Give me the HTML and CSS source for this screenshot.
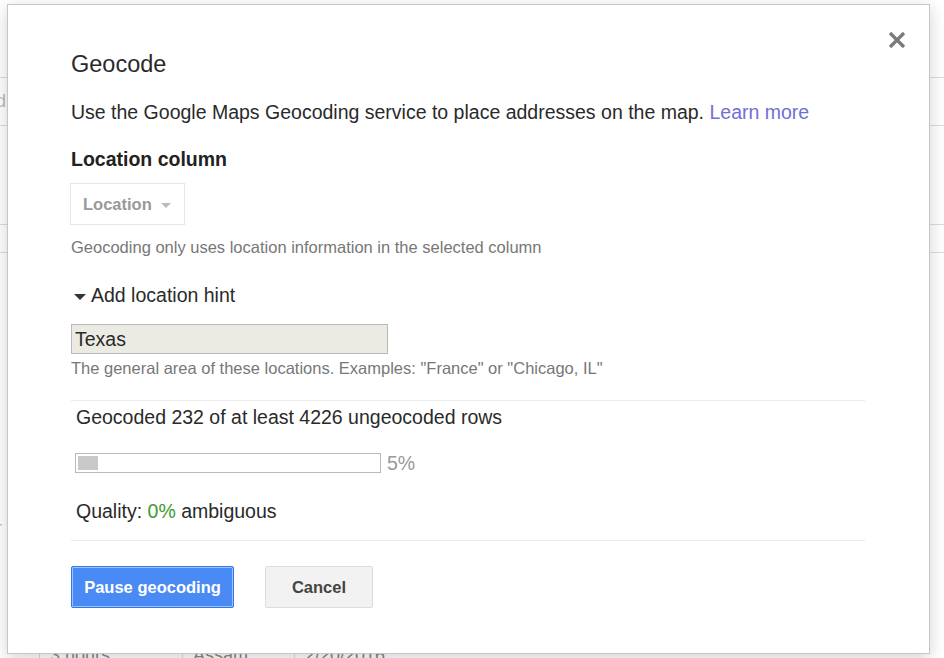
FILE: index.html
```html
<!DOCTYPE html>
<html>
<head>
<meta charset="utf-8">
<link rel="stylesheet" href="styles.css">
</head>
<body>
<div class="page">
  <div class="bg-row r1"></div>
  <div class="bg-row r2"><span class="bg-txt">d</span></div>
  <div class="bg-row r3"></div>
  <div class="bg-row r4"></div>
  <div class="bg-row r5"></div>
  <div class="bg-row r6"><span class="bg-txt">r</span></div>
  <div class="bg-row r7">
    <span class="cell c1"></span>
    <span class="cell c2">3 hours</span>
    <span class="cell c3">Assam</span>
    <span class="cell c4">2/20/2016</span>
  </div>
</div>

<div class="dialog">
  <button class="close" aria-label="Close">
    <svg width="18" height="18" viewBox="0 0 18 18"><path d="M2 2L16 16M16 2L2 16" stroke="#7a7a7a" stroke-width="3.2" fill="none"/></svg>
  </button>
  <h1 class="title">Geocode</h1>
  <p class="desc">Use the Google Maps Geocoding service to place addresses on the map. <a class="link" href="#">Learn more</a></p>
  <h2 class="label">Location column</h2>
  <div class="select">Location <span class="caret"></span></div>
  <p class="help">Geocoding only uses location information in the selected column</p>
  <div class="hint-toggle"><span class="tri"></span>Add location hint</div>
  <div class="input">Texas</div>
  <p class="help tight">The general area of these locations. Examples: "France" or "Chicago, IL"</p>
  <div class="status">
    <div class="status-line">Geocoded 232 of at least 4226 ungeocoded rows</div>
    <div class="progress-row">
      <div class="progress"><div class="fill" style="width:6.5%"></div></div>
      <span class="pct">5%</span>
    </div>
    <div class="quality">Quality: <span class="green">0%</span> ambiguous</div>
  </div>
  <div class="buttons">
    <button class="btn primary">Pause geocoding</button>
    <button class="btn">Cancel</button>
  </div>
</div>
</body>
</html>
```
FILE: styles.css
```css
* { box-sizing: border-box; }
html, body { margin: 0; padding: 0; }
body {
  width: 944px;
  height: 658px;
  overflow: hidden;
  background: #fff;
  font-family: "Liberation Sans", Arial, sans-serif;
  color: #2a2a2a;
  position: relative;
}
.page { display: flex; flex-direction: column; }
.bg-row { border-bottom: 1px solid #dcdcdc; position: relative; color: #bbb; font-size: 18px; }
.r1 { height: 78px; }
.r2 { height: 48px; display: flex; align-items: center; }
.r3 { height: 99px; }
.r4 { height: 28px; }
.r5 { height: 255px; border-bottom: none; }
.r6 { height: 40px; border-bottom: none; display: flex; align-items: center; }
.r7 { height: 120px; display: flex; align-items: flex-start; padding-top: 97px; border-bottom: none; color: #888; }
.bg-txt { margin-left: -4px; }
.cell { display: block; border-right: 1px solid #ddd; height: 30px; padding-left: 10px; }
.c1 { width: 40px; padding: 0; }
.c2 { width: 143px; }
.c3 { width: 112px; }
.c4 { width: 140px; border-right: none; }

.dialog {
  position: absolute;
  left: 7px;
  top: 4px;
  width: 923px;
  height: 650px;
  background: #fff;
  border: 1px solid #c6c6c6;
  box-shadow: 0 4px 16px rgba(0,0,0,0.18);
  padding: 47px 64px 0 63px;
}
.close {
  position: absolute;
  right: 23px;
  top: 26px;
  border: 0;
  background: none;
  padding: 0;
  width: 18px;
  height: 18px;
  cursor: pointer;
}
.close svg { display: block; }
.title { margin: 0; font-size: 23.5px; font-weight: normal; line-height: 24px; color: #2a2a2a; }
.desc { margin: 24px 0 0; font-size: 19.5px; line-height: 24px; }
.link { color: #6f6fd6; text-decoration: none; }
.label { margin: 23px 0 0; font-size: 19.5px; line-height: 24px; font-weight: bold; color: #222; }
.select {
  margin-top: 12px;
  display: inline-flex;
  align-items: center;
  height: 42px;
  padding: 0 13px 0 12px;
  margin-left: -1px;
  border: 1px solid #e6e6e6;
  font-size: 16.5px;
  font-weight: bold;
  color: #999;
}
.caret {
  display: inline-block;
  margin-left: 9px;
  margin-top: 2px;
  width: 0; height: 0;
  border-left: 5px solid transparent;
  border-right: 5px solid transparent;
  border-top: 5px solid #bbb;
}
.help { margin: 13px 0 0; font-size: 16.5px; line-height: 18px; color: #777; }
.help.tight { margin-top: 5px; }
.hint-toggle { margin-top: 27px; font-size: 19.5px; line-height: 24px; display: flex; align-items: center; }
.tri {
  display: inline-block;
  width: 0; height: 0;
  margin: 3px 5px 0 3px;
  border-left: 6px solid transparent;
  border-right: 6px solid transparent;
  border-top: 6px solid #333;
}
.input {
  margin-top: 17px;
  width: 317px;
  height: 30px;
  background: #ebebe4;
  border: 1px solid #b9b9b9;
  font-size: 19.5px;
  line-height: 28px;
  padding-left: 3px;
}
.status {
  margin-top: 23px;
  border-top: 1px solid #ebebeb;
  border-bottom: 1px solid #ebebeb;
  padding: 4px 0 17px 5px;
}
.status-line { font-size: 19.5px; line-height: 24px; }
.progress-row { margin-top: 24px; display: flex; align-items: center; height: 20px; }
.progress {
  width: 306px;
  height: 20px;
  margin-left: -1px;
  border: 1px solid #b9b9b9;
  padding: 2px;
}
.fill { height: 100%; background: #c8c8c8; }
.pct { margin-left: 6px; font-size: 19.5px; line-height: 20px; color: #999; }
.quality { margin-top: 26px; font-size: 19.5px; line-height: 24px; }
.green { color: #3d9a2c; }
.buttons { margin-top: 25px; display: flex; gap: 31px; }
.btn {
  height: 42px;
  width: 108px;
  padding: 0;
  font-family: "Liberation Sans", Arial, sans-serif;
  font-size: 16.5px;
  font-weight: bold;
  color: #444;
  background: #f2f2f2;
  border: 1px solid #dcdcdc;
  border-radius: 2px;
}
.btn.primary {
  width: 163px;
  color: #fff;
  background: #4a8af4;
  border: 1px solid #3079ed;
  box-shadow: inset 0 0 0 1px #9fc1fb;
}
```
